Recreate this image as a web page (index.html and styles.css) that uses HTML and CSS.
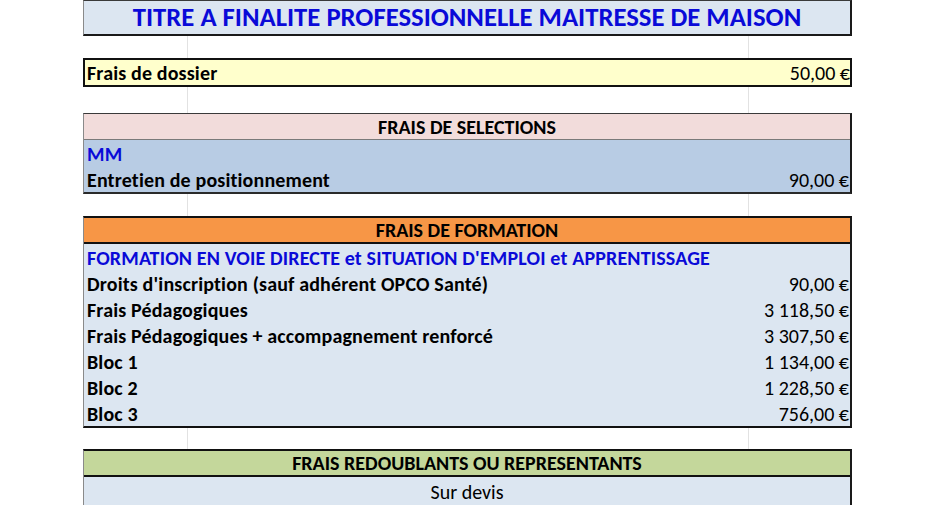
FILE: index.html
```html
<!DOCTYPE html>
<html lang="fr">
<head>
<meta charset="utf-8">
<title>Titre à finalité professionnelle Maîtresse de maison</title>
<link rel="stylesheet" href="styles.css">
</head>
<body>
<div class="sheet">
  <div class="row title">TITRE A FINALITE PROFESSIONNELLE MAITRESSE DE MAISON</div>
  <div class="row gap g22"><span class="gl"></span><span class="gl"></span></div>

  <div class="row dossier"><span class="lbl">Frais de dossier</span><span class="val">50,00 €</span></div>
  <div class="row gap g26"><span class="gl"></span><span class="gl"></span></div>

  <div class="block sel">
    <div class="row head pink">FRAIS DE SELECTIONS</div>
    <div class="row line blue-txt">MM</div>
    <div class="row line"><span class="lbl">Entretien de positionnement</span><span class="val">90,00 €</span></div>
  </div>
  <div class="row gap g22"><span class="gl"></span><span class="gl"></span></div>

  <div class="block form">
    <div class="row head orange">FRAIS DE FORMATION</div>
    <div class="row line blue-txt">FORMATION EN VOIE DIRECTE et SITUATION D'EMPLOI et APPRENTISSAGE</div>
    <div class="row line"><span class="lbl">Droits d'inscription (sauf adhérent OPCO Santé)</span><span class="val">90,00 €</span></div>
    <div class="row line"><span class="lbl">Frais Pédagogiques</span><span class="val">3 118,50 €</span></div>
    <div class="row line"><span class="lbl">Frais Pédagogiques + accompagnement renforcé</span><span class="val">3 307,50 €</span></div>
    <div class="row line"><span class="lbl">Bloc 1</span><span class="val">1 134,00 €</span></div>
    <div class="row line"><span class="lbl">Bloc 2</span><span class="val">1 228,50 €</span></div>
    <div class="row line"><span class="lbl">Bloc 3</span><span class="val">756,00 €</span></div>
  </div>
  <div class="row gap g21"><span class="gl"></span><span class="gl"></span></div>

  <div class="block redo">
    <div class="row head green">FRAIS REDOUBLANTS OU REPRESENTANTS</div>
    <div class="row devis">Sur devis</div>
  </div>
</div>
</body>
</html>
```
FILE: styles.css
```css
html, body {
  margin: 0;
  padding: 0;
  background: #ffffff;
}
body {
  font-family: Carlito, Lato, "Liberation Sans", sans-serif;
  font-size: 20px;
  color: #000;
  overflow: hidden;
  height: 505px;
}
.sheet {
  width: 769px;
  margin-left: 83px;
  display: flex;
  flex-direction: column;
}
.row {
  box-sizing: border-box;
  display: flex;
  white-space: nowrap;
}
.title {
  height: 36px;
  line-height: 33px;
  background: #dce6f1;
  border-top: 1px solid #3a3a3a;
  border-left: 1px solid #8a8a8a;
  border-right: 2px solid #1a1a1a;
  border-bottom: 2px solid #1a1a1a;
  justify-content: center;
  color: #0a0ad8;
  font-weight: 700;
  font-size: 26.7px;
}
.g21 { height: 21px; }
.g22 { height: 22px; }
.g26 { height: 26px; }
.gap .gl {
  width: 1px;
  height: 100%;
  background: #e2e2e2;
}
.gap .gl:first-child { margin-left: 104px; }
.gap .gl:last-child { margin-left: 560px; }
.lbl {
  flex: 1;
  font-weight: 700;
  letter-spacing: 0.15px;
}
.val {
  font-weight: 400;
}
.dossier {
  height: 29px;
  line-height: 25px;
  background: #ffffcc;
  border: 2px solid #111;
  padding: 1px 0 0 2px;
}
.block {
  display: flex;
  flex-direction: column;
  border-right: 2px solid #1a1a1a;
}
.head {
  justify-content: center;
  font-weight: 700;
}
.line {
  height: 26px;
  line-height: 23px;
  padding: 3px 1px 0 3px;
  font-weight: 700;
}
.blue-txt {
  color: #0a0ad8;
  letter-spacing: 0.15px;
}
.sel {
  border-top: 1px solid #3a3a3a;
  border-left: 1px solid #8a8a8a;
  border-bottom: 2px solid #2a2a2a;
}
.sel .pink {
  height: 26px;
  line-height: 24px;
  padding-top: 1px;
  background: #f2dcdb;
  border-bottom: 1px solid #7a7a7a;
}
.sel .line {
  background: #b8cce4;
}
.form {
  border-top: 2px solid #111;
  border-left: 1px solid #8a8a8a;
  border-bottom: 2px solid #111;
}
.form .orange {
  height: 26px;
  line-height: 23px;
  padding-top: 1px;
  background: #f79646;
  border-bottom: 2px solid #111;
}
.form .line {
  background: #dce6f1;
}
.redo {
  border-top: 2px solid #111;
  border-left: 1px solid #8a8a8a;
}
.redo .green {
  height: 26px;
  line-height: 23px;
  padding-top: 1px;
  background: #c4d79b;
  border-bottom: 2px solid #111;
}
.devis {
  height: 40px;
  line-height: 24px;
  padding-top: 3px;
  background: #dce6f1;
  justify-content: center;
}
```
